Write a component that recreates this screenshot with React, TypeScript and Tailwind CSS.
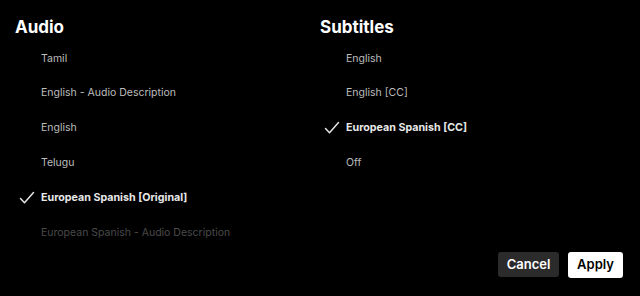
import React from "react";

type Item = { label: string; selected?: boolean; disabled?: boolean };

const audio: Item[] = [
  { label: "Tamil" },
  { label: "English - Audio Description" },
  { label: "English" },
  { label: "Telugu" },
  { label: "European Spanish [Original]", selected: true },
  { label: "European Spanish - Audio Description", disabled: true },
];

const subs: Item[] = [
  { label: "English" },
  { label: "English [CC]" },
  { label: "European Spanish [CC]", selected: true },
  { label: "Off" },
];

function Check() {
  return (
    <svg width="16" height="14" viewBox="0 0 16 14" fill="none">
      <path d="M1.5 7.5 L5.5 11.8 L14.5 1.5" stroke="#e5e5e5" strokeWidth="1.5" strokeLinecap="round" strokeLinejoin="round" />
    </svg>
  );
}

function Column({ title, items }: { title: string; items: Item[] }) {
  return (
    <div className="flex flex-col">
      <h2 className="h-[25px] text-[17px] leading-[25px] font-bold text-white">{title}</h2>
      <ul className="mt-[1px] flex flex-col">
        {items.map((it) => (
          <li key={it.label} className="relative flex h-[34.8px] items-center pl-[26px]">
            {it.selected && (
              <span className="absolute left-[4px] top-1/2 -translate-y-1/2 flex">
                <Check />
              </span>
            )}
            <span
              className={
                it.selected
                  ? "text-[10.7px] font-bold text-[#e8e8e8]"
                  : it.disabled
                  ? "text-[10.5px] text-[#4a4a4a]"
                  : "text-[10.5px] text-[#bdbdbd]"
              }
            >
              {it.label}
            </span>
          </li>
        ))}
      </ul>
    </div>
  );
}

export default function App() {
  return (
    <div
      className="flex h-[296px] w-[640px] flex-col bg-black"
      style={{ fontFamily: "Inter, 'Noto Sans', sans-serif" }}
    >
      <div className="grid flex-1 grid-cols-[305px_1fr] pl-[15px] pt-[15px]">
        <Column title="Audio" items={audio} />
        <Column title="Subtitles" items={subs} />
      </div>
      <div className="flex justify-end gap-[9px] pb-[18px] pr-[17px]">
        <button className="h-[25px] w-[61px] rounded-[3px] bg-[#2b2b2b] text-[13px] font-semibold text-white">
          Cancel
        </button>
        <button className="h-[26px] w-[55px] rounded-[3px] bg-white text-[13px] font-semibold text-black">
          Apply
        </button>
      </div>
    </div>
  );
}
